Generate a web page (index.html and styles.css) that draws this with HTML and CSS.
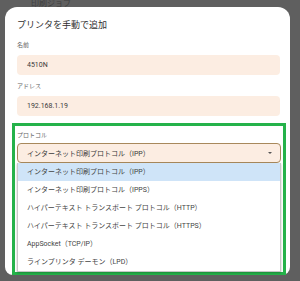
FILE: index.html
```html
<!DOCTYPE html>
<html lang="ja">
<head>
    <meta charset="UTF-8">
    <meta name="viewport" content="width=device-width, initial-scale=1.0">
    <title>プリンタを手動で追加</title>
    <link rel="stylesheet" href="styles.css">
</head>
<body>
    <div class="backdrop-title">印刷ジョブ</div>

    <div class="dialog">
        <h1 class="dialog-title">プリンタを手動で追加</h1>

        <div class="field">
            <label class="field-label">名前</label>
            <div class="field-input">4510N</div>
        </div>

        <div class="field">
            <label class="field-label">アドレス</label>
            <div class="field-input">192.168.1.19</div>
        </div>

        <!-- 注目枠 -->
        <div class="highlight-box">
            <label class="field-label">プロトコル</label>
            <div class="select">
                <span>インターネット印刷プロトコル（IPP）</span>
                <span class="select-arrow"></span>
            </div>
            <ul class="options">
                <li class="selected">インターネット印刷プロトコル（IPP）</li>
                <li>インターネット印刷プロトコル（IPPS）</li>
                <li>ハイパーテキスト トランスポート プロトコル（HTTP）</li>
                <li>ハイパーテキスト トランスポート プロトコル（HTTPS）</li>
                <li>AppSocket（TCP/IP）</li>
                <li>ラインプリンタ デーモン（LPD）</li>
            </ul>
        </div>
    </div>
</body>
</html>
```

FILE: styles.css
```css
body {
    margin: 0;
    height: 281px;
    overflow: hidden;
    background-color: #5f5f5f;
    font-family: Roboto, "Noto Sans CJK JP", sans-serif;
}

.backdrop-title {
    height: 7px;
    line-height: 7px;
    padding-left: 31px;
    font-size: 8px;
    color: #3e3e3e;
    overflow: hidden;
}

.backdrop-title::first-line {
    line-height: 0;
}

.dialog {
    width: 263px;
    margin-left: 5px;
    padding: 12px 10px 0 12px;
    background-color: #fff;
    border-radius: 12px 12px 8px 8px;
}

.dialog-title {
    margin: 0 0 9px;
    font-size: 9px;
    line-height: 12px;
    font-weight: 400;
    color: #2f2f2f;
}

.field {
    margin-bottom: 6px;
}

.field-label {
    display: block;
    margin-bottom: 5px;
    font-size: 6px;
    line-height: 10px;
    color: #666;
}

.field-input {
    height: 20px;
    line-height: 20px;
    padding-left: 10px;
    border-radius: 4px;
    background-color: #fcede2;
    font-size: 7px;
    color: #3a3a3a;
}

.highlight-box {
    margin: 7px -6px -3px -5px;
    padding: 4px 2px 0 2px;
    border: 3px solid #25b24a;
}

.highlight-box .field-label {
    margin-bottom: 3px;
}

.select {
    display: flex;
    align-items: center;
    justify-content: space-between;
    height: 18px;
    padding: 0 8px 0 9px;
    border: 1px solid #a8895c;
    border-radius: 4px;
    background-color: #fcede2;
    font-size: 7px;
    color: #3a3a3a;
}

.select-arrow {
    width: 0;
    height: 0;
    border-left: 2px solid transparent;
    border-right: 2px solid transparent;
    border-top: 2px solid #555;
}

.options {
    list-style: none;
    margin: 0;
    padding: 0;
    border: 1px solid #c8c8c8;
    border-top: none;
    background-color: #fff;
    box-shadow: 0 1px 2px rgba(0, 0, 0, 0.25);
}

.options li {
    height: 18px;
    line-height: 18px;
    padding-left: 9px;
    font-size: 7px;
    color: #444;
    white-space: nowrap;
}

.options li.selected {
    background-color: #cfe4f8;
}
```
